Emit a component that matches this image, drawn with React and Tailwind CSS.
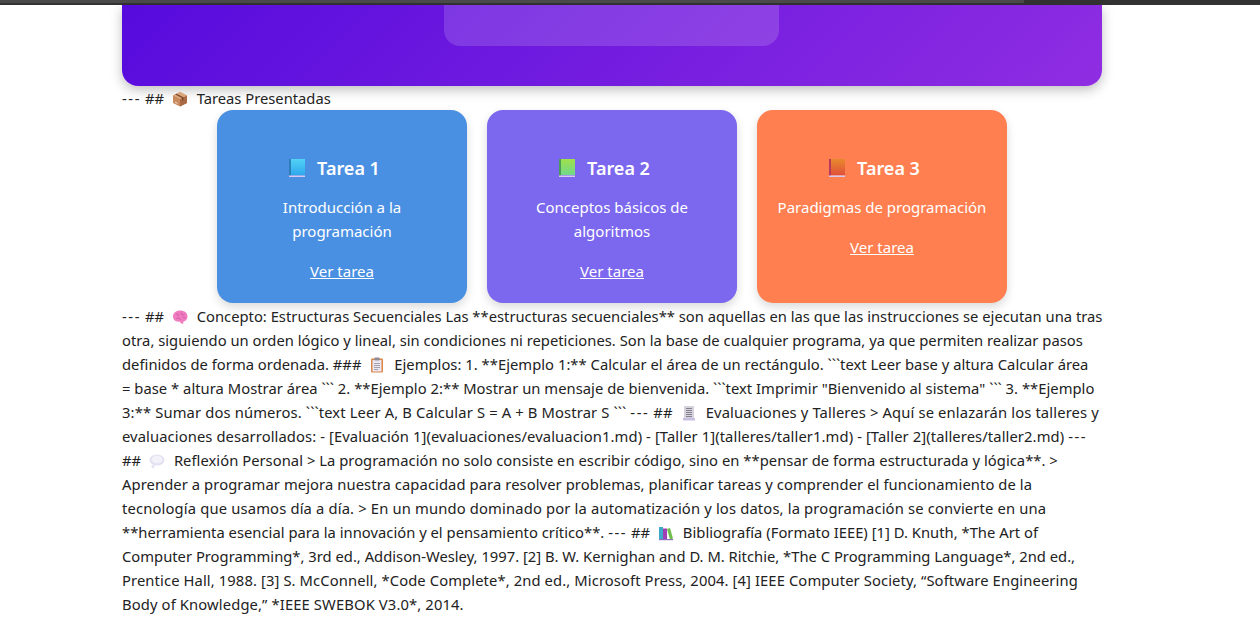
const Emoji = ({ children }) => (
  <svg viewBox="0 0 16 16" className="inline-block w-4 h-4 align-[-3px] ml-1 mr-[5px]">
    {children}
  </svg>
);

const Dashes = () => <span className="tracking-[1.6px]">---</span>;

const Box = () => (
  <Emoji>
    <path d="M8 1 15 4.500V12L8 15.500 1 12V4.500Z" fill="#c98a5e" />
    <path d="M8 8 15 4.500V12L8 15.500Z" fill="#a96a45" />
    <path d="M8 1 15 4.500 8 8 1 4.500Z" fill="#dca67c" />
    <path d="M4.500 2.800 11.500 6.300V9L10 9.800V7L3.200 3.500Z" fill="#7d4a2c" />
    <path d="M3 10.500 5.500 11.700V13L3 11.800Z" fill="#e8cdb8" />
  </Emoji>
);

const Brain = () => (
  <Emoji>
    <path d="M1 7.500C1 4 4 1.500 8 1.500S15.500 3.500 15.500 7.500C15.500 10.500 13.500 12 11.500 12.500L11 15 8.500 14 8 12.500C4 13.500 1 11 1 7.500Z" fill="#f07cc0" />
    <path d="M4 5.500C6 4 7 6 6 7.500M9 3.500C8.500 6 11 6.500 12.500 5.500M4 9.500C6 8.500 8 9.500 8.500 11M10.500 8C11.500 9 12.500 9 13.500 8.500" stroke="#d458a6" strokeWidth="0.9" fill="none" />
  </Emoji>
);

const Clipboard = () => (
  <Emoji>
    <rect x="2" y="1.500" width="12" height="14" rx="1" fill="#d9874a" />
    <rect x="3.500" y="3" width="9" height="11.500" fill="#ece6f0" />
    <rect x="5.500" y="0.500" width="5" height="3" rx="0.800" fill="#8d8a96" />
    <path d="M5 6.500H11M5 8.500H11M5 10.500H11M5 12.500H9" stroke="#9c98a8" strokeWidth="0.900" />
  </Emoji>
);

const Ledger = () => (
  <Emoji>
    <path d="M3 1H13V13H3Z" fill="#d6d3dc" />
    <path d="M2 13H14V15.500H2Z" fill="#c9bfe0" />
    <path d="M5 3.500H11M5 5.500H11M5 7.500H11M5 9.500H11M5 11.500H11" stroke="#85828f" strokeWidth="1" />
  </Emoji>
);

const Thought = () => (
  <Emoji>
    <ellipse cx="8" cy="7" rx="7.500" ry="5.500" fill="#e4e0f2" />
    <ellipse cx="8" cy="6.500" rx="5.500" ry="3.800" fill="#f3f1fa" />
    <circle cx="4" cy="13.500" r="1.500" fill="#e4e0f2" />
  </Emoji>
);

const Books = () => (
  <Emoji>
    <rect x="1" y="2" width="4" height="12" fill="#3fa9c9" />
    <rect x="5" y="3.500" width="4" height="10.500" fill="#a33fb5" />
    <path d="M9 4 12 3 15 13.500 12 14.500Z" fill="#6fbf4a" />
    <rect x="1" y="14" width="14" height="1.200" fill="#8a6fc0" />
  </Emoji>
);

const Book = ({ id, from, to, spine }) => (
  <svg viewBox="0 0 16 20" className="w-4 h-5">
    <defs>
      <linearGradient id={id} x1="0" y1="0" x2="0" y2="1">
        <stop offset="0" stopColor={from} />
        <stop offset="1" stopColor={to} />
      </linearGradient>
    </defs>
    <rect x="0" y="1" width="16" height="16" fill={`url(#${id})`} />
    <rect x="0" y="1" width="2" height="18" fill={spine} />
    <rect x="0" y="17.500" width="16" height="1.500" fill="#d9c8f0" />
  </svg>
);

const tareas = [
  { title: "Tarea 1", text: "Introducción a la programación", bg: "bg-[#4a90e2]", from: "#52d2f5", to: "#2fa8ee", spine: "#2c7fb8" },
  { title: "Tarea 2", text: "Conceptos básicos de algoritmos", bg: "bg-[#7b68ee]", from: "#a0e04a", to: "#70d88a", spine: "#4a9a5a" },
  { title: "Tarea 3", text: "Paradigmas de programación", bg: "bg-[#ff7f50]", from: "#e88a2c", to: "#e0503a", spine: "#b83a5a" },
];

// tracking per line: the fallback font runs a little narrower than the original on some lines
const lines = [
  { track: "tracking-[0.01px]", body: <><Dashes /> ## <Brain /> Concepto: Estructuras Secuenciales Las **estructuras secuenciales** son aquellas en las que las instrucciones se ejecutan una tras</> },
  { track: "tracking-[0.015px]", body: "otra, siguiendo un orden lógico y lineal, sin condiciones ni repeticiones. Son la base de cualquier programa, ya que permiten realizar pasos" },
  { track: "tracking-[0.03px]", body: <>definidos de forma ordenada. ### <Clipboard /> Ejemplos: 1. **Ejemplo 1:** Calcular el área de un rectángulo. ```text Leer base y altura Calcular área</> },
  { track: "tracking-[0.035px]", body: "= base * altura Mostrar área ``` 2. **Ejemplo 2:** Mostrar un mensaje de bienvenida. ```text Imprimir \"Bienvenido al sistema\" ``` 3. **Ejemplo" },
  { track: "tracking-[0.14px]", body: <>3:** Sumar dos números. ```text Leer A, B Calcular S = A + B Mostrar S ``` <Dashes /> ## <Ledger /> Evaluaciones y Talleres &gt; Aquí se enlazarán los talleres y</> },
  { track: "tracking-[0.1px]", body: <>evaluaciones desarrollados: - [Evaluación 1](evaluaciones/evaluacion1.md) - [Taller 1](talleres/taller1.md) - [Taller 2](talleres/taller2.md) <Dashes /></> },
  { track: "tracking-[0.04px]", body: <>## <Thought /> Reflexión Personal &gt; La programación no solo consiste en escribir código, sino en **pensar de forma estructurada y lógica**. &gt;</> },
  { track: "tracking-[0.088px]", body: "Aprender a programar mejora nuestra capacidad para resolver problemas, planificar tareas y comprender el funcionamiento de la" },
  { track: "tracking-[0.16px]", body: "tecnología que usamos día a día. > En un mundo dominado por la automatización y los datos, la programación se convierte en una" },
  { track: "tracking-[0.02px]", body: <>**herramienta esencial para la innovación y el pensamiento crítico**. <Dashes /> ## <Books /> Bibliografía (Formato IEEE) [1] D. Knuth, *The Art of</> },
  { track: "tracking-[0.01px]", body: "Computer Programming*, 3rd ed., Addison-Wesley, 1997. [2] B. W. Kernighan and D. M. Ritchie, *The C Programming Language*, 2nd ed.," },
  { track: "tracking-[0.11px]", body: "Prentice Hall, 1988. [3] S. McConnell, *Code Complete*, 2nd ed., Microsoft Press, 2004. [4] IEEE Computer Society, “Software Engineering" },
  { track: "tracking-[0.13px]", body: "Body of Knowledge,” *IEEE SWEBOK V3.0*, 2014." },
];

export default function App() {
  return (
    <div className="min-h-[632px] bg-white text-[#222] text-[14.75px] leading-6 font-['Noto_Sans',sans-serif]">
      <div className="h-[5px] bg-[#333] flex">
        <div className="w-[1024px] h-[3px] bg-[#4a4a4a]" />
      </div>

      <div className="w-[1224px]">
        <div className="w-[980px] mx-auto">
          <header className="h-[81px] rounded-b-2xl bg-[linear-gradient(135deg,#560bdd,#8f2de2)] shadow-[0_4px_12px_rgba(0,0,0,0.25)] flex justify-center">
            <div className="w-[335px] h-[41px] mr-px rounded-b-2xl bg-white/15" />
          </header>

          <p>
            <Dashes /> ## <Box /> Tareas Presentadas
          </p>

          <section className="flex justify-center gap-5">
            {tareas.map((t, i) => (
              <article key={t.title} className={`w-[250px] h-[193px] rounded-2xl px-5 pt-[45px] text-center text-[15px] text-white shadow-[0_4px_10px_rgba(0,0,0,0.15)] ${t.bg}`}>
                <h3 className="flex items-center justify-center gap-3 h-[26px] pr-[15px] text-[18px] font-semibold">
                  <Book id={`book${i}`} from={t.from} to={t.to} spine={t.spine} />
                  {t.title}
                </h3>
                <p className="mt-[14px]">{t.text}</p>
                <a href="#" className="block mt-4 underline">Ver tarea</a>
              </article>
            ))}
          </section>

          <div className="mt-px whitespace-nowrap">
            {lines.map((line, i) => (
              <p key={i} className={line.track}>{line.body}</p>
            ))}
          </div>
        </div>
      </div>
    </div>
  );
}
